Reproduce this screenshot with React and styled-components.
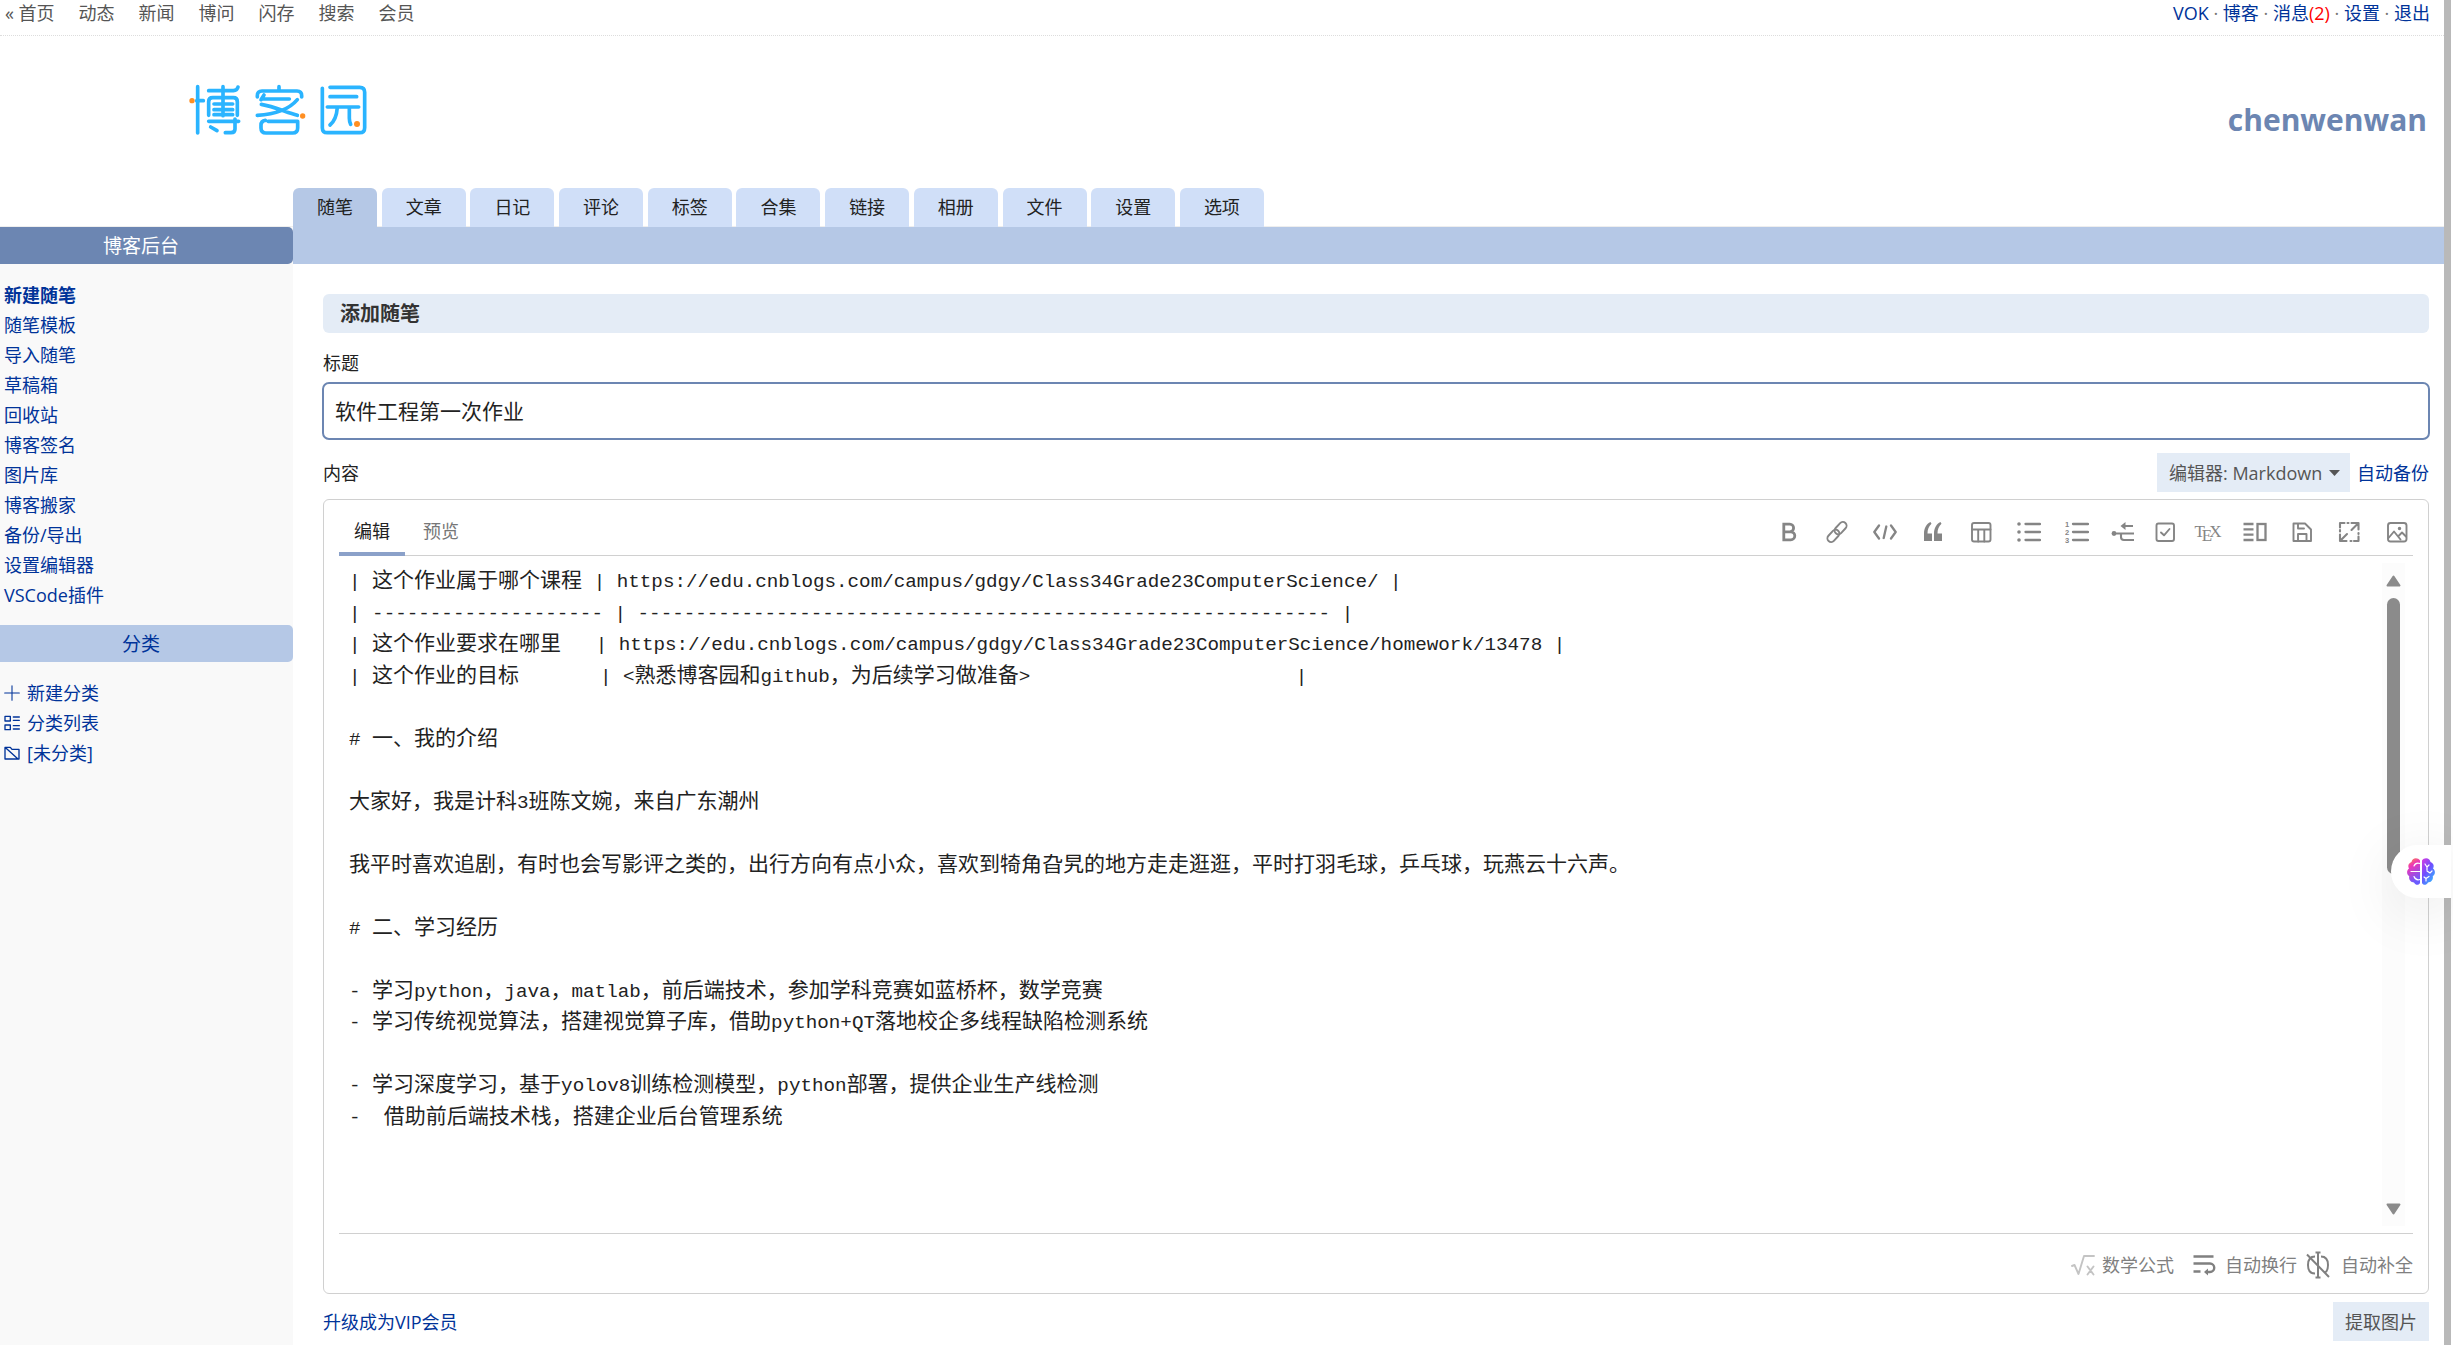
import React from "react";
import styled, { createGlobalStyle, css } from "styled-components";

const sans = `"Open Sans", "Noto Sans CJK SC", sans-serif`;
const mono = `"Liberation Mono", "Noto Sans CJK SC", monospace`;

const c = {
  link: "#003399",
  steel: "#6c86b2",
  band: "#b5c8e6",
  tab: "#d0dff8",
  pale: "#e4ecf6",
  line: "#d0d0d0",
  icon: "#858585",
  text: "#222222",
};

const GlobalStyle = createGlobalStyle`
  *, *::before, *::after { box-sizing: border-box; }
  body { margin: 0; background: #fff; font: 18px/30px ${sans}; color: ${c.text}; }
  ul { margin: 0; padding: 0; list-style: none; }
  h1, h2 { margin: 0; }
  a { color: ${c.link}; text-decoration: none; }
  button, input, select, textarea { font: inherit; color: inherit; }
`;

const Shell = styled.div`
  display: flex;
  min-height: 100vh;
  padding-right: 2px;
`;

const Page = styled.div`
  flex: 1;
  min-width: 0;
  display: flex;
  flex-direction: column;
`;

const Edge = styled.div`
  width: 7px;
  background: #b9b9b9;
`;

const TopBar = styled.div`
  display: flex;
  justify-content: space-between;
  padding: 0 14px 9px 5px;
  line-height: 26px;
  border-bottom: 1px dotted #ddd;
`;

const SiteNav = styled.nav`
  display: flex;
  gap: 24px;
  a { color: #555; }
`;

const UserNav = styled.nav`
  color: #777;
`;

const Count = styled.span`
  color: #f00;
`;

const Header = styled.header`
  display: flex;
  justify-content: space-between;
  align-items: center;
  padding: 39px 17px 43px 180px;
`;

const BlogTitle = styled.h1`
  padding-top: 20px;
  font-size: 30px;
  line-height: 44px;
  font-weight: 700;
  a { color: ${c.steel}; }
`;

const Tabs = styled.ul`
  padding-left: 293px;
  height: 39px;
  box-shadow: inset 0 -1px #eeeeee;
`;

const Tab = styled.li`
  display: inline-block;
  vertical-align: top;
  a {
    display: block;
    padding: 0 24px;
    line-height: 39px;
    color: ${c.text};
    border-radius: 6px 6px 0 0;
    background: ${(p) => (p.$active ? c.band : c.tab)};
  }
`;

const Band = styled.div`
  display: grid;
  grid-template-columns: 293px 1fr;
  background: linear-gradient(to right, #f9f9f9 293px, ${c.band} 293px);
`;

const SideTitle = styled.h2`
  padding: 1px 11px 0 0;
  font-size: 19px;
  line-height: 36px;
  font-weight: 400;
  text-align: center;
  border-radius: 0 5px 5px 0;
  color: ${(p) => (p.$dark ? "#fff" : c.link)};
  background: ${(p) => (p.$dark ? c.steel : c.band)};
`;

const Columns = styled.div`
  flex: 1;
  display: grid;
  grid-template-columns: 293px 1fr;
`;

const Sidebar = styled.aside`
  background: #f9f9f9;
  padding-top: 16px;
`;

const SideList = styled.ul`
  padding: 0 4px;
  margin-bottom: 15px;
`;

const CategoryList = styled(SideList)`
  margin-top: 16px;
`;

const SideLink = styled.a`
  display: flex;
  align-items: center;
  gap: 7px;
  font-weight: ${(p) => (p.$bold ? 700 : 400)};
`;

const Main = styled.main`
  min-width: 0;
  padding: 30px 15px 4px 30px;
  display: flex;
  flex-direction: column;
`;

const Heading = styled.h2`
  padding: 1px 17px 0;
  margin-bottom: 17px;
  font-size: 20px;
  line-height: 38px;
  color: #333;
  background: ${c.pale};
  border-radius: 6px;
`;

const Label = styled.label`
  line-height: 26px;
`;

const TitleInput = styled.input`
  margin: 6px -1px 13px;
  padding: 0 11px 2px;
  height: 58px;
  font-size: 21px;
  border: 2px solid ${c.steel};
  border-radius: 7px;
  outline: none;
`;

const Row = styled.div`
  display: flex;
  align-items: center;
  justify-content: space-between;
`;

const Group = styled.div`
  display: flex;
  align-items: center;
  gap: 7px;
`;

const Picker = styled.div`
  display: flex;
  align-items: center;
  position: relative;
  background: ${c.pale};
  color: #555;
  select {
    appearance: none;
    border: 0;
    background: none;
    height: 39px;
    padding: 0 27px 0 12px;
    outline: none;
  }
  svg {
    position: absolute;
    right: 10px;
    pointer-events: none;
  }
`;

const Editor = styled.section`
  margin: 7px 0 8px;
  padding: 0 15px;
  border: 1px solid ${c.line};
  border-radius: 6px;
`;

const EditorBar = styled.div`
  display: flex;
  justify-content: space-between;
  height: 56px;
  border-bottom: 1px solid ${c.line};
`;

const ModeTabs = styled.div`
  display: flex;
  gap: 3px;
`;

const bare = css`
  border: 0;
  background: none;
  padding: 0;
  display: flex;
  align-items: center;
  justify-content: center;
`;

const ModeTab = styled.button`
  ${bare}
  padding: 9px 15px 0;
  height: 56px;
  color: ${(p) => (p.$active ? c.text : "#777")};
  border-bottom: 4px solid ${(p) => (p.$active ? "#8ba1c9" : "transparent")};
`;

const Tools = styled.div`
  display: flex;
  align-items: center;
  gap: 16px;
  padding-top: 8px;
`;

const Tool = styled.button`
  ${bare}
  width: ${(p) => p.$w}px;
  height: 32px;
  color: ${c.icon};
  svg { flex: none; }
`;

const TexLabel = styled.span`
  font: 17px/20px "Liberation Serif", serif;
  sub {
    font-size: 17px;
    line-height: 1px;
    margin: 0 -3px;
  }
`;

const EditArea = styled.div`
  display: flex;
  padding: 7px 8px 7px 0;
`;

const Source = styled.div`
  flex: 1;
  min-width: 0;
  min-height: 663px;
  padding: 3px 10px 0;
  overflow: hidden;
  outline: none;
  font-family: ${mono};
  font-size: 21px;
  line-height: 1.5;
  white-space: pre;
`;

const Line = styled.div`
  min-height: 1.5em;
`;

const Latin = styled.span`
  line-height: 1;
  font-size-adjust: ch-width 0.55;
`;

const Track = styled.div`
  width: 23px;
  display: flex;
  flex-direction: column;
  align-items: center;
  padding: 12px 0 11px;
  background: #fcfcfc;
`;

const Thumb = styled.div`
  width: 13px;
  height: 276px;
  margin: 11px 0 auto;
  border-radius: 7px;
  background: #8b8b8b;
`;

const EditorFoot = styled.div`
  display: flex;
  align-items: center;
  justify-content: flex-end;
  height: 60px;
  border-top: 1px solid ${c.line};
  padding-top: 3px;
  gap: 9px;
`;

const FootButton = styled.button`
  ${bare}
  gap: ${(p) => p.$gap}px;
  padding-left: ${(p) => p.$lead || 0}px;
  color: #808080;
`;

const Extract = styled.button`
  ${bare}
  height: 39px;
  padding: 0 12px;
  color: #555;
  background: ${c.pale};
`;

const Assistant = styled.button`
  ${bare}
  position: fixed;
  right: 2px;
  top: 845px;
  width: 60px;
  height: 53px;
  background: #fff;
  border-radius: 27px 0 0 27px;
  box-shadow: 0 12px 60px rgba(0, 0, 0, 0.1);
`;

const Stroke = ({ size = 24, w = 2, children, color = "currentColor" }) => (
  <svg width={size} height={size} viewBox="0 0 24 24" fill="none" stroke={color}
    strokeWidth={w} strokeLinecap="round" strokeLinejoin="round" aria-hidden="true">
    {children}
  </svg>
);

const Logo = () => (
  <svg width="200" height="70" viewBox="0 0 600 210" role="img" aria-label="博客园"
    fill="none" stroke="#2ab4ff" strokeWidth="11" strokeLinecap="round" strokeLinejoin="round">
    <path d="M53 35V174M50 77H70M86 47H160Q172 46 174 36M129 35V122M86 121V80Q86 68 98 68H160Q172 68 172 80V121M102 87H158M102 104H158M102 119H158M86 139H176M165 132V162Q165 173 153 173H136M92 156L111 167" />
    <path d="M232 66V62Q232 48 246 48H351Q365 48 365 62V66M297 35V46M252 60L243 74M252 72H328M352 74C330 100 290 118 232 121M244 88C280 94 310 108 352 121M256 136C246 137 243 142 243 151V159Q243 174 258 174H338Q353 174 353 159V140M264 139H353" />
    <path d="M427 40V158Q427 173 442 173H539Q554 173 554 158V52Q554 37 539 37H450M450 65H530M442 96H536M472 97C470 125 462 140 450 150M508 98V130Q508 140 512 148" />
    <g fill="#ff8f22" stroke="none">
      <circle cx="36" cy="77" r="8" />
      <circle cx="368" cy="123" r="8" />
      <circle cx="531" cy="147" r="9" />
    </g>
  </svg>
);

const BoldIcon = () => <Stroke w={2.8}><path d="M6.8 4.2h6a3.7 3.7 0 0 1 0 7.6h-6zM6.8 11.8h7a4 4 0 0 1 0 8h-7z" strokeLinejoin="miter" /></Stroke>;
const LinkIcon = () => (
  <Stroke w={1.9}>
    <g transform="rotate(-47 12 12)">
      <rect x="-0.3" y="8.3" width="14" height="7.4" rx="3.7" />
      <rect x="10.3" y="8.3" width="14" height="7.4" rx="3.7" />
    </g>
  </Stroke>
);
const CodeIcon = () => <Stroke w={2.3}><path d="M6 5.5L1.3 12 6 18.5M18 5.5l4.7 6.5L18 18.5M13.3 6.5l-2.6 11.5" /></Stroke>;
const QuoteIcon = () => (
  <svg width="24" height="24" viewBox="0 0 24 24" fill="currentColor" aria-hidden="true">
    <path d="M3 21v-7.5C3 8 5.5 4 9.500 2l1 1.800C7.800 6 6.500 9.500 6.500 13.500H11V21zM13 21v-7.500C13 8 15.500 4 19.500 2l1 1.800C17.800 6 16.500 9.500 16.500 13.500H21V21z" />
  </svg>
);
const TableIcon = () => <Stroke w={1.9}><rect x="3" y="3" width="18.5" height="18.5" rx="2" /><path d="M3 9.5h18.5M9.2 9.5v12M15.3 9.5v12" /></Stroke>;
const BulletIcon = () => <Stroke w={2.3}><path d="M8.5 4H23M8.5 12H23M8.5 20H23" /><path d="M2 4h.01M2 12h.01M2 20h.01" strokeWidth="3.6" /></Stroke>;
const NumberIcon = () => (
  <Stroke w={2.3}>
    <path d="M8 4H23M8 12H23M8 20H23" />
    <g fill="currentColor" stroke="none" fontFamily="Liberation Sans, sans-serif" fontWeight="700" fontSize="7.5">
      <text x="0" y="6.5">1</text><text x="0" y="14.5">2</text><text x="0" y="22.5">3</text>
    </g>
  </Stroke>
);
const TreeIcon = () => (
  <Stroke w={2.1}>
    <path d="M3 13.5h20M10 13.5v3.5q0 3 3 3H23M12 6h10" strokeLinecap="butt" />
    <circle cx="3" cy="13.5" r="2.4" fill="currentColor" stroke="none" />
    <path d="M14.5 2v8L9.5 6z" fill="currentColor" stroke="none" />
  </Stroke>
);
const CheckIcon = () => <Stroke w={1.9}><rect x="3.5" y="3.5" width="17.5" height="17.5" rx="2" /><path d="M8 12.5l3 2.8L16.5 9" /></Stroke>;
const ColumnsIcon = () => <Stroke w={2.3}><path d="M.5 4h10M.5 9.3h10M.5 14.7h10M.5 20h10" strokeLinecap="butt" /><rect x="14.5" y="4" width="8" height="16" strokeLinejoin="miter" /></Stroke>;
const SaveIcon = () => <Stroke w={1.9}><path d="M3.5 3.5h11.5l6 6V21H3.5zM8 21v-7h8.5v7M8 4v4.5h6" /></Stroke>;
const FullIcon = () => <Stroke w={2.1}><path d="M3 7.5V3h4.5M21.5 16.5V21H17M14.5 3h7v6.5M21 3.5L14.5 10M9.5 21H3v-6.5M3.5 20.5L10 14M3 10v1.5M10.5 3h1M21.5 13v1M13.5 21h1" /></Stroke>;
const ImageIcon = () => <Stroke w={1.9}><rect x="3" y="3" width="18.5" height="18.5" rx="2.5" /><path d="M3.5 18l5.5-6.5 6.5 8M13.5 16l3.5-3.5 4 4" /><circle cx="14.5" cy="8.5" r=".8" fill="currentColor" /></Stroke>;

const tools = [
  ["粗体", 32, BoldIcon], ["链接", 32, LinkIcon], ["代码", 32, CodeIcon], ["引用", 32, QuoteIcon],
  ["表格", 32, TableIcon], ["无序列表", 32, BulletIcon], ["有序列表", 32, NumberIcon], ["目录", 28, TreeIcon],
  ["任务", 24, CheckIcon], ["公式", 30, null], ["分栏", 32, ColumnsIcon], ["保存", 30, SaveIcon],
  ["全屏", 32, FullIcon], ["图片", 32, ImageIcon],
];

const siteLinks = ["动态", "新闻", "博问", "闪存", "搜索", "会员"];
const tabs = ["随笔", "文章", "日记", "评论", "标签", "合集", "链接", "相册", "文件", "设置", "选项"];
const sideLinks = ["新建随笔", "随笔模板", "导入随笔", "草稿箱", "回收站", "博客签名", "图片库", "博客搬家", "备份/导出", "设置编辑器", "VSCode插件"];

const PlusIcon = () => <Stroke size={16} w={1.6}><path d="M12 1v22M1 12h22" /></Stroke>;
const ListIcon = () => <Stroke size={16} w={2}><rect x="1.5" y="2" width="8" height="7" /><rect x="1.5" y="15" width="8" height="7" /><path d="M14 3h9M14 8h9M14 16h9M14 21h9" /></Stroke>;
const NoFolderIcon = () => <Stroke size={16} w={2}><path d="M1.5 3.5h8l2.5 3h10.5V21H1.5zM1.5 3.5L21 21" /></Stroke>;

const categories = [["新建分类", PlusIcon], ["分类列表", ListIcon], ["[未分类]", NoFolderIcon]];

const source = [
  "| 这个作业属于哪个课程 | https://edu.cnblogs.com/campus/gdgy/Class34Grade23ComputerScience/ |",
  `| ${"-".repeat(20)} | ${"-".repeat(60)} |`,
  "| 这个作业要求在哪里   | https://edu.cnblogs.com/campus/gdgy/Class34Grade23ComputerScience/homework/13478 |",
  `| 这个作业的目标       | <熟悉博客园和github，为后续学习做准备>${" ".repeat(23)}|`,
  "",
  "# 一、我的介绍",
  "",
  "大家好，我是计科3班陈文婉，来自广东潮州",
  "",
  "我平时喜欢追剧，有时也会写影评之类的，出行方向有点小众，喜欢到犄角旮旯的地方走走逛逛，平时打羽毛球，乒乓球，玩燕云十六声。",
  "",
  "# 二、学习经历",
  "",
  "- 学习python，java，matlab，前后端技术，参加学科竞赛如蓝桥杯，数学竞赛",
  "- 学习传统视觉算法，搭建视觉算子库，借助python+QT落地校企多线程缺陷检测系统",
  "",
  "- 学习深度学习，基于yolov8训练检测模型，python部署，提供企业生产线检测",
  "-  借助前后端技术栈，搭建企业后台管理系统",
];

const runs = (line) =>
  line.split(/([\x20-\x7e]+)/).filter(Boolean).map((run, i) =>
    /^[\x20-\x7e]/.test(run) ? <Latin key={i}>{run}</Latin> : run
  );

const Brain = () => (
  <svg width="28" height="27" viewBox="0 0 28 27" aria-hidden="true">
    <defs>
      <linearGradient id="left" x1="0" y1="0" x2="0.3" y2="1">
        <stop offset="0" stopColor="#ff9a2e" /><stop offset="0.35" stopColor="#ee35b8" /><stop offset="1" stopColor="#6a5cff" />
      </linearGradient>
      <linearGradient id="right" x1="0" y1="0" x2="0.7" y2="1">
        <stop offset="0" stopColor="#d83be0" /><stop offset="0.5" stopColor="#6f4dff" /><stop offset="1" stopColor="#35b4ff" />
      </linearGradient>
    </defs>
    <path fill="url(#left)" d="M13 2.500C11-1 5-.5 4.500 4 1.500 5 .5 8 2 10.500-.8 12.500-.3 16.500 2.200 18 1.500 22 4 24.500 7 24.500c1.500 3 5 3 6 .5z" />
    <path fill="url(#right)" d="M15 2.500C17-1 23-.5 23.500 4c3 1 4 4 2.500 6.500 2.800 2 2.300 6-.2 7.500.7 4-1.800 6.500-4.800 6.500-1.500 3-5 3-6 .5z" />
    <path fill="none" stroke="#fff" strokeWidth="1.2" strokeLinecap="round" d="M13 5.500C10 4.500 8 5.500 7 8M4 13.500h9M13 21.500c-3 1-5-.5-6-3M18 6l2 3 2-2M20 9v3M20 13l3 2 2-2M17 19l2 1.500 3-2M19 20.500v2.500" />
  </svg>
);

export default function App() {
  return (
    <Shell lang="zh-CN">
      <GlobalStyle />
      <Page>
        <TopBar>
          <SiteNav>
            <a href="#home">« 首页</a>
            {siteLinks.map((t) => <a key={t} href={`#${t}`}>{t}</a>)}
          </SiteNav>
          <UserNav>
            <a href="#vok">VOK</a> · <a href="#blog">博客</a> · <a href="#msg">消息<Count>(2)</Count></a> · <a href="#settings">设置</a> · <a href="#logout">退出</a>
          </UserNav>
        </TopBar>
        <Header>
          <Logo />
          <BlogTitle><a href="#chenwenwan">chenwenwan</a></BlogTitle>
        </Header>
        <Tabs>
          {tabs.map((t, i) => (
            <React.Fragment key={t}>
              <Tab $active={i === 0}><a href={`#tab-${i}`}>{t}</a></Tab>{" "}
            </React.Fragment>
          ))}
        </Tabs>
        <Band><SideTitle $dark>博客后台</SideTitle></Band>
        <Columns>
          <Sidebar>
            <SideList>
              {sideLinks.map((t, i) => <li key={t}><SideLink href={`#side-${i}`} $bold={i === 0}>{t}</SideLink></li>)}
            </SideList>
            <SideTitle>分类</SideTitle>
            <CategoryList>
              {categories.map(([t, Icon]) => (
                <li key={t}><SideLink href={`#${t}`}><Icon />{t}</SideLink></li>
              ))}
            </CategoryList>
          </Sidebar>
          <Main>
            <Heading>添加随笔</Heading>
            <Label htmlFor="post-title">标题</Label>
            <TitleInput id="post-title" defaultValue="软件工程第一次作业" />
            <Row>
              <Label as="span" id="post-body-label">内容</Label>
              <Group>
                <Picker>
                  <select aria-label="编辑器" defaultValue="md">
                    <option value="md">编辑器: Markdown</option>
                  </select>
                  <svg width="11" height="6" viewBox="0 0 11 6" aria-hidden="true"><path d="M0 0h11L5.5 6z" fill="#555" /></svg>
                </Picker>
                <a href="#backup">自动备份</a>
              </Group>
            </Row>
            <Editor>
              <EditorBar>
                <ModeTabs>
                  <ModeTab type="button" $active>编辑</ModeTab>
                  <ModeTab type="button">预览</ModeTab>
                </ModeTabs>
                <Tools>
                  {tools.map(([name, w, Icon]) => (
                    <Tool key={name} type="button" aria-label={name} $w={w}>
                      {Icon ? <Icon /> : <TexLabel>T<sub>E</sub>X</TexLabel>}
                    </Tool>
                  ))}
                </Tools>
              </EditorBar>
              <EditArea>
                <Source
                  role="textbox"
                  aria-multiline="true"
                  aria-labelledby="post-body-label"
                  contentEditable
                  suppressContentEditableWarning
                  spellCheck={false}
                >
                  {source.map((line, i) => <Line key={i}>{runs(line)}</Line>)}
                </Source>
                <Track>
                  <svg width="15" height="12" viewBox="0 0 15 12" aria-hidden="true"><path d="M7.5 1.5L13.5 10.5h-12z" fill="#8b8b8b" stroke="#8b8b8b" strokeWidth="2" strokeLinejoin="round" /></svg>
                  <Thumb />
                  <svg width="15" height="12" viewBox="0 0 15 12" aria-hidden="true"><path d="M7.5 10.5L13.5 1.5h-12z" fill="#8b8b8b" stroke="#8b8b8b" strokeWidth="2" strokeLinejoin="round" /></svg>
                </Track>
              </EditArea>
              <EditorFoot>
                <FootButton type="button" $gap={7}>
                  <Stroke color="#c4c4c4" w={1.9}><path d="M1 13l2.5-1L7.5 21 13 3h10M16.5 13.5l6 8M22.5 13.5l-6 8" /></Stroke>
                  数学公式
                </FootButton>
                <FootButton type="button" $gap={9} $lead={9}>
                  <Stroke w={2.4}><path d="M1.5 3.5h20M1.5 10.5h16.5a4 4 0 0 1 0 8.5h-4M1.5 18.5h7" strokeLinecap="butt" /><path d="M16 15.5L12 19l4 3.5z" fill="currentColor" stroke="none" /></Stroke>
                  自动换行
                </FootButton>
                <FootButton type="button" $gap={11}>
                  <svg width="24" height="28" viewBox="0 0 24 28" fill="none" stroke="currentColor" strokeWidth="2" aria-hidden="true">
                    <path d="M12 2v24M9.5 1.5h5M9.5 26.5h5M9 5.5C4 5.5 2 8 2 14s2 8.5 7 8.5M15 5.5c5 0 7 2.5 7 8.5 0 4-1 6.5-3 7.5M1 3.5L23 26" />
                  </svg>
                  自动补全
                </FootButton>
              </EditorFoot>
            </Editor>
            <Row>
              <a href="#vip">升级成为VIP会员</a>
              <Extract type="button">提取图片</Extract>
            </Row>
          </Main>
        </Columns>
      </Page>
      <Edge />
      <Assistant type="button" aria-label="助手"><Brain /></Assistant>
    </Shell>
  );
}
